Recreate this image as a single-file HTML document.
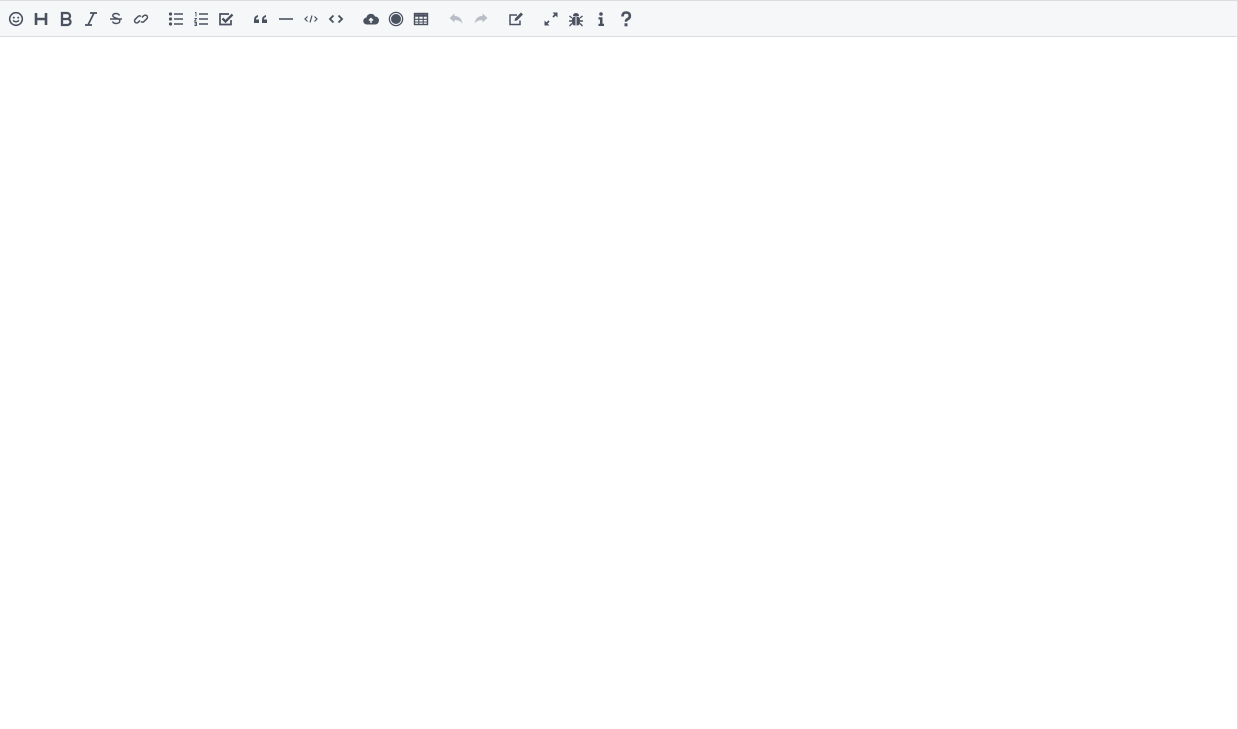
<!DOCTYPE html>
<html><head><meta charset="utf-8"><style>
html,body{margin:0;padding:0;width:1238px;height:729px;background:#fff;overflow:hidden;font-family:"Liberation Sans",sans-serif}
.wrap{position:absolute;left:0;top:0;width:1237px;height:729px;border-right:1px solid #dcdde0}
.tb{position:absolute;left:0;top:0;width:1237px;height:36px;background:#f6f7f9;border-top:1px solid #dcdde0;border-bottom:1px solid #dcdde0;box-sizing:border-box;height:37px}
svg{position:absolute;top:10px;width:16px;height:16px}
.c{color:#4a5260}
.g{color:#b9bec6}
</style></head><body><div class="wrap"><div class="tb">
<svg class="c" style="left:8px" viewBox="0 0 16 16"><circle cx="8" cy="8" r="6.3" fill="none" stroke="currentColor" stroke-width="1.6"/><circle cx="5.8" cy="6.6" r="1" fill="currentColor"/><circle cx="10.2" cy="6.6" r="1" fill="currentColor"/><path d="M5 9.3q3 3 6 0" fill="none" stroke="currentColor" stroke-width="1.5"/></svg>
<svg class="c" style="left:33px" viewBox="0 0 16 16"><path d="M3 2v12M13 2v12M3 8h10" stroke="currentColor" stroke-width="2.6" fill="none"/></svg>
<svg class="c" style="left:58px" viewBox="0 0 16 16"><path d="M4 2h5a3 3 0 010 6H4zM4 8h5.5a3 3 0 010 6H4z" stroke="currentColor" stroke-width="2.3" fill="none"/></svg>
<svg class="c" style="left:83px" viewBox="0 0 16 16"><path d="M7 2h7M2 14h7M11 2L5 14" stroke="currentColor" stroke-width="1.7" fill="none"/></svg>
<svg class="c" style="left:108px" viewBox="0 0 16 16"><path d="M11.5 4.5q-1-2-3.5-2t-3.3 1.8q0 2 3.3 2.7q3.8.8 3.8 3t-3.8 2.5q-2.5 0-3.5-2M2 8h12" stroke="currentColor" stroke-width="1.4" fill="none"/></svg>
<svg class="c" style="left:133px" viewBox="0 0 16 16"><path d="M7 9.5l-1.8 1.8a2 2 0 01-3-3L5 5.5a2 2 0 013 0M9 6.5l1.8-1.8a2 2 0 013 3L11 10.5a2 2 0 01-3 0" stroke="currentColor" stroke-width="1.5" fill="none"/></svg>
<svg class="c" style="left:168px" viewBox="0 0 16 16"><circle cx="2.5" cy="3" r="1.6" fill="currentColor"/><circle cx="2.5" cy="8" r="1.6" fill="currentColor"/><circle cx="2.5" cy="13" r="1.6" fill="currentColor"/><path d="M6 3h9M6 8h9M6 13h9" stroke="currentColor" stroke-width="1.6"/></svg>
<svg class="c" style="left:193px" viewBox="0 0 16 16"><path d="M2 1.5h1v4M1.5 7.5h2l-2 2.5h2M1.5 11.5h2v3h-2M1.5 13h2" stroke="currentColor" stroke-width="0.9" fill="none"/><path d="M6 3h9M6 8h9M6 13h9" stroke="currentColor" stroke-width="1.6"/></svg>
<svg class="c" style="left:218px" viewBox="0 0 16 16"><path d="M13 9v4.5H2V3h9" stroke="currentColor" stroke-width="1.7" fill="none"/><path d="M4.5 7.5l3 3 7-7" stroke="currentColor" stroke-width="2.3" fill="none"/></svg>
<svg class="c" style="left:253px" viewBox="0 0 16 16"><path d="M1 12V9q0-4 4-5v2q-2 .6-2 2.5h3V12zM9 12V9q0-4 4-5v2q-2 .6-2 2.5h3V12z" fill="currentColor"/></svg>
<svg class="c" style="left:278px" viewBox="0 0 16 16"><path d="M1 8h14" stroke="currentColor" stroke-width="1.6"/></svg>
<svg class="c" style="left:303px" viewBox="0 0 16 16"><path d="M4.5 5.5L2 8l2.5 2.5M11.5 5.5L14 8l-2.5 2.5M9 4.5l-2 7" stroke="currentColor" stroke-width="1.2" fill="none"/></svg>
<svg class="c" style="left:328px" viewBox="0 0 16 16"><path d="M5.5 4.5L2 8l3.5 3.5M10.5 4.5L14 8l-3.5 3.5" stroke="currentColor" stroke-width="1.9" fill="none"/></svg>
<svg class="c" style="left:363px" viewBox="0 0 16 16"><path d="M4 13.5a3.5 3.5 0 01-.5-7 4.5 4.5 0 018.5-1 3.5 3.5 0 010 8z" fill="currentColor"/><path d="M8 12V8M6 9.5l2-2 2 2" stroke="#f6f7f9" stroke-width="1.5" fill="none"/></svg>
<svg class="c" style="left:388px" viewBox="0 0 16 16"><circle cx="8" cy="8" r="6.6" fill="none" stroke="currentColor" stroke-width="1.3"/><circle cx="8" cy="8" r="5" fill="currentColor"/></svg>
<svg class="c" style="left:413px" viewBox="0 0 16 16"><rect x="1.5" y="2.5" width="13" height="11" fill="none" stroke="currentColor" stroke-width="1.4"/><path d="M1.5 4.5h13" stroke="currentColor" stroke-width="2.5"/><path d="M1.5 8.3h13M1.5 11h13M5.8 3v10M10.2 3v10" stroke="currentColor" stroke-width="1.1"/></svg>
<svg class="g" style="left:448px" viewBox="0 0 16 16"><path d="M1.5 7L6.5 2.5V5q7 0 8 8q-2-4-8-4v2.5z" fill="currentColor"/></svg>
<svg class="g" style="left:473px" viewBox="0 0 16 16"><path d="M14.5 7L9.5 2.5V5q-7 0-8 8q2-4 8-4v2.5z" fill="currentColor"/></svg>
<svg class="c" style="left:508px" viewBox="0 0 16 16"><path d="M12 9.5v4H2V4h7" stroke="currentColor" stroke-width="1.5" fill="none"/><path d="M6.5 10l.5-2.5 6-6 2 2-6 6z" fill="currentColor"/></svg>
<svg class="c" style="left:543px" viewBox="0 0 16 16"><path d="M9.5 1.5h5v5zM6.5 14.5h-5v-5z" fill="currentColor"/><path d="M13 3L10 6M3 13l3-3" stroke="currentColor" stroke-width="1.8"/></svg>
<svg class="c" style="left:568px" viewBox="0 0 16 16"><path d="M5 5q0-3 3-3t3 3z" fill="currentColor"/><rect x="4" y="5.5" width="8" height="9" rx="3" fill="currentColor"/><path d="M8 6v8.5" stroke="#f6f7f9" stroke-width="1"/><path d="M4 7L1.5 5M12 7l2.5-2M4 10H1M12 10h3M4 12.5L1.5 15M12 12.5l2.5 2.5" stroke="currentColor" stroke-width="1.4"/></svg>
<svg class="c" style="left:593px" viewBox="0 0 16 16"><circle cx="8" cy="3" r="1.8" fill="currentColor"/><path d="M5.5 6.3h4v6.5h1.5V15h-5.5v-2.2H7V8.5H5.5z" fill="currentColor"/></svg>
<svg class="c" style="left:618px" viewBox="0 0 16 16"><path d="M4.5 5.5q0-4 3.7-4t3.6 3.6q0 2-2 3t-1.8 2.6" stroke="currentColor" stroke-width="2.6" fill="none"/><rect x="6.5" y="12.3" width="3" height="3" fill="currentColor"/></svg>
</div></div></body></html>
